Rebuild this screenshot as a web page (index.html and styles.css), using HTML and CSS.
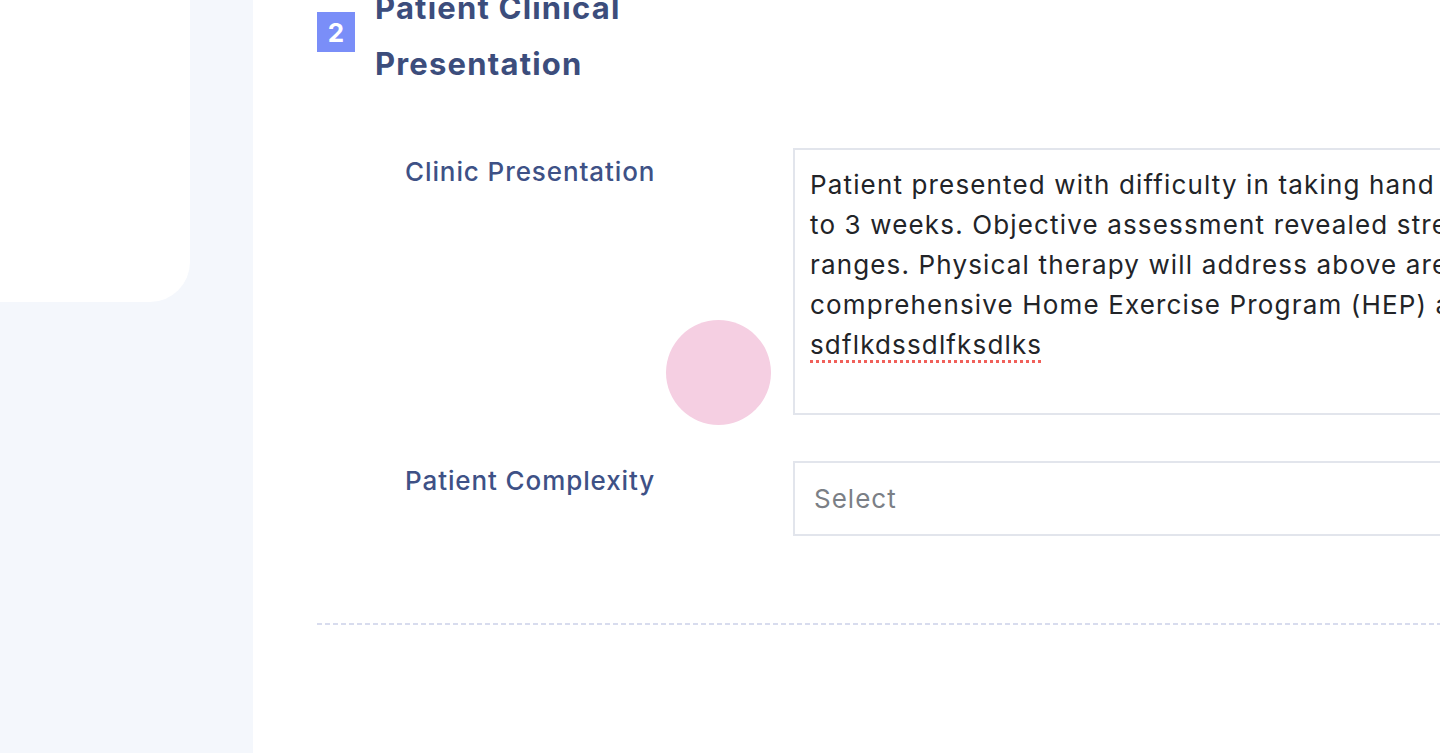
FILE: index.html
```html
<!DOCTYPE html>
<html lang="en">
<head>
<meta charset="utf-8">
<title>Patient Clinical Presentation</title>
<link rel="stylesheet" href="styles.css">
</head>
<body>
<div class="page">
  <aside class="sidebar">
    <div class="side-card"></div>
  </aside>
  <main class="main">
    <section class="section">
      <header class="section-head">
        <span class="badge">2</span>
        <h2 class="section-title">Patient Clinical<br>Presentation</h2>
      </header>
      <div class="form">
        <div class="row">
          <label class="label">Clinic Presentation</label>
          <div class="field textarea">Patient presented with difficulty in taking hand to mouth for past 2
to 3 weeks. Objective assessment revealed strength and ROM deficits in all
ranges. Physical therapy will address above areas through a
comprehensive Home Exercise Program (HEP) and skilled interventions.
<span class="misspelled">sdflkdssdlfksdlks</span></div>
          <span class="touch"></span>
        </div>
        <div class="row">
          <label class="label label-select">Patient Complexity</label>
          <div class="field select">Select</div>
        </div>
      </div>
      <div class="divider"></div>
    </section>
  </main>
</div>
</body>
</html>
```

FILE: styles.css
```css
html, body {
  margin: 0;
  padding: 0;
  height: 100%;
  overflow: hidden;
}
body {
  background: #f4f7fc;
  font-family: "Inter", "Open Sans", sans-serif;
}
.page {
  display: flex;
  height: 753px;
  width: 1440px;
  overflow: hidden;
}
.sidebar {
  width: 253px;
  flex: 0 0 253px;
  background: #f4f7fc;
}
.side-card {
  width: 190px;
  height: 302px;
  background: #ffffff;
  border-bottom-right-radius: 40px;
}
.main {
  flex: 1 1 auto;
  background: #ffffff;
  padding-left: 64px;
  min-width: 0;
}
.section {
  margin-top: -20px;
  width: 1300px;
}
.section-head {
  display: flex;
  align-items: flex-start;
  gap: 20px;
}
.badge {
  margin-top: 32px;
  width: 38px;
  height: 40px;
  background: #7a8ef8;
  color: #ffffff;
  font-weight: 700;
  font-size: 26px;
  display: flex;
  align-items: center;
  justify-content: center;
}
.section-title {
  margin: 0;
  color: #3c4d7c;
  font-size: 31px;
  font-weight: 700;
  letter-spacing: 1.2px;
  line-height: 56px;
}
.form {
  margin-top: 56px;
  padding-left: 88px;
  display: flex;
  flex-direction: column;
  gap: 46px;
}
.row {
  display: flex;
  position: relative;
}
.label {
  width: 388px;
  flex: 0 0 388px;
  color: #3e5186;
  font-size: 26px;
  font-weight: 500;
  letter-spacing: 0.9px;
  line-height: 34px;
  padding-top: 7px;
}
.label-select {
  padding-top: 3px;
}
.field {
  border: 2px solid #e2e5ec;
  box-sizing: border-box;
  width: 900px;
  color: #222428;
  font-size: 26px;
  letter-spacing: 1.15px;
}
.textarea {
  height: 267px;
  padding: 15px 15px;
  line-height: 40px;
  white-space: pre;
  overflow: hidden;
}
.misspelled {
  text-decoration: underline dotted #f0605a;
  text-decoration-thickness: 3px;
  text-underline-offset: 6px;
}
.select {
  height: 75px;
  padding: 0 19px;
  display: flex;
  align-items: center;
  color: #7b7f86;
  letter-spacing: 1px;
}
.touch {
  position: absolute;
  left: 261px;
  top: 172px;
  width: 105px;
  height: 105px;
  border-radius: 50%;
  background: #f5cfe2;
}
.divider {
  margin-top: 87px;
  height: 2px;
  background: repeating-linear-gradient(to right, #d8dcee 0 5px, transparent 5px 8px);
}
```
